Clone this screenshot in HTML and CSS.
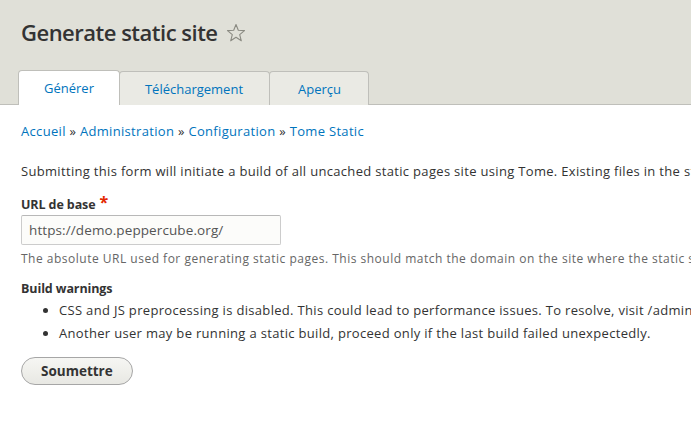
FILE: index.html
```html
<!DOCTYPE html>
<html lang="fr">
<head>
<meta charset="utf-8">
<title>Generate static site</title>
<link rel="stylesheet" href="styles.css">
</head>
<body>
<header class="page-header">
  <h1 class="page-title">Generate static site <span class="shortcut"><svg width="20" height="20" viewBox="0 0 20 20"><polygon points="10,1.5 12.3,7.3 18.5,7.6 13.7,11.6 15.3,17.8 10,14.3 4.7,17.8 6.3,11.6 1.5,7.6 7.7,7.3" fill="none" stroke="#8a8a82" stroke-width="1.1" stroke-linejoin="round"/></svg></span></h1>
  <ul class="tabs">
    <li class="tab active"><a href="#">Générer</a></li>
    <li class="tab"><a href="#">Téléchargement</a></li>
    <li class="tab"><a href="#">Aperçu</a></li>
  </ul>
</header>
<main class="content">
  <nav class="breadcrumb"><a href="#">Accueil</a> » <a href="#">Administration</a> » <a href="#">Configuration</a> » <a href="#">Tome Static</a></nav>
  <p class="intro">Submitting this form will initiate a build of all uncached static pages site using Tome. Existing files in the static export directory will be overwritten.</p>
  <div class="form-item">
    <label class="label">URL de base<span class="required">*</span></label>
    <input class="text-input" type="text" value="https://demo.peppercube.org/">
    <div class="description">The absolute URL used for generating static pages. This should match the domain on the site where the static site will be deployed.</div>
  </div>
  <div class="warnings">
    <div class="label">Build warnings</div>
    <ul class="warning-list">
      <li>CSS and JS preprocessing is disabled. This could lead to performance issues. To resolve, visit /admin/config/development/performance.</li>
      <li>Another user may be running a static build, proceed only if the last build failed unexpectedly.</li>
    </ul>
  </div>
  <button class="button" type="button">Soumettre</button>
</main>
</body>
</html>
```
FILE: styles.css
```css
html, body {
  margin: 0;
  padding: 0;
  background: #fff;
}
body {
  font-family: "Open Sans", "DejaVu Sans", sans-serif;
  font-size: 13px;
  letter-spacing: 0.32px;
  color: #333;
  overflow: hidden;
  width: 691px;
  height: 427px;
}
a {
  color: #0074bd;
  text-decoration: none;
}
.page-header {
  background: #e0e0d8;
  border-bottom: 1px solid #bfbfba;
  padding: 0 0 0 21px;
  height: 105px;
  box-sizing: border-box;
  display: flex;
  flex-direction: column;
  justify-content: space-between;
}
.page-title {
  margin: 17px 0 0;
  font-size: 22px;
  font-weight: 600;
  letter-spacing: -0.5px;
  line-height: 30px;
  color: #333;
  display: flex;
  align-items: center;
  gap: 8px;
}
.shortcut {
  display: inline-flex;
  margin-top: 1px;
}
.tabs {
  list-style: none;
  margin: 0 0 -1px -3px;
  padding: 0;
  display: flex;
  align-items: flex-end;
}
.tab {
  height: 34px;
  box-sizing: border-box;
  border: 1px solid #bfbfba;
  border-bottom: none;
  border-radius: 4px 4px 0 0;
  background: #eaeae4;
  margin-right: -1px;
  display: flex;
  align-items: center;
  letter-spacing: 0;
}
.tab.active {
  background: #fff;
  height: 35px;
}
.tab a {
  display: block;
  padding: 0 25px;
  line-height: 32px;
}
.tab:nth-child(2) a {
  padding: 0 26px 0 25px;
}
.tab:nth-child(3) a {
  padding: 0 27px 0 28px;
}
.content {
  padding: 0 21px;
  white-space: nowrap;
}
.breadcrumb {
  margin-top: 16px;
  line-height: 20px;
}
.intro {
  margin: 20px 0 0;
  line-height: 20px;
}
.form-item {
  margin-top: 15px;
}
.label {
  display: block;
  font-weight: 700;
  font-size: 12.5px;
  letter-spacing: -0.1px;
  line-height: 18px;
}
.required {
  color: #e32700;
  margin-left: 4px;
  font-size: 16px;
  vertical-align: top;
  position: relative;
  top: -3px;
}
.text-input {
  display: block;
  margin-top: 1px;
  width: 260px;
  height: 30px;
  box-sizing: border-box;
  border: 1px solid #ccc;
  border-top-color: #b8b8b8;
  border-radius: 2px;
  background: #fcfcfa;
  padding: 0 7px;
  font-family: inherit;
  font-size: 13.5px;
  letter-spacing: 0.1px;
  color: #555;
}
.description {
  margin-top: 5px;
  font-size: 12px;
  letter-spacing: 0.5px;
  color: #666;
  line-height: 18px;
}
.warnings {
  margin-top: 12px;
}
.warning-list {
  margin: 1px 0 0;
  padding-left: 38px;
}
.warning-list li {
  line-height: 23px;
}
.button {
  margin-top: 12px;
  height: 28px;
  padding: 0 19px;
  border: 1px solid #a6a6a6;
  border-radius: 20em;
  background: linear-gradient(#f6f6f3, #e8e8e3);
  font-family: inherit;
  font-weight: 700;
  font-size: 13.5px;
  letter-spacing: 0;
  color: #333;
}
```
